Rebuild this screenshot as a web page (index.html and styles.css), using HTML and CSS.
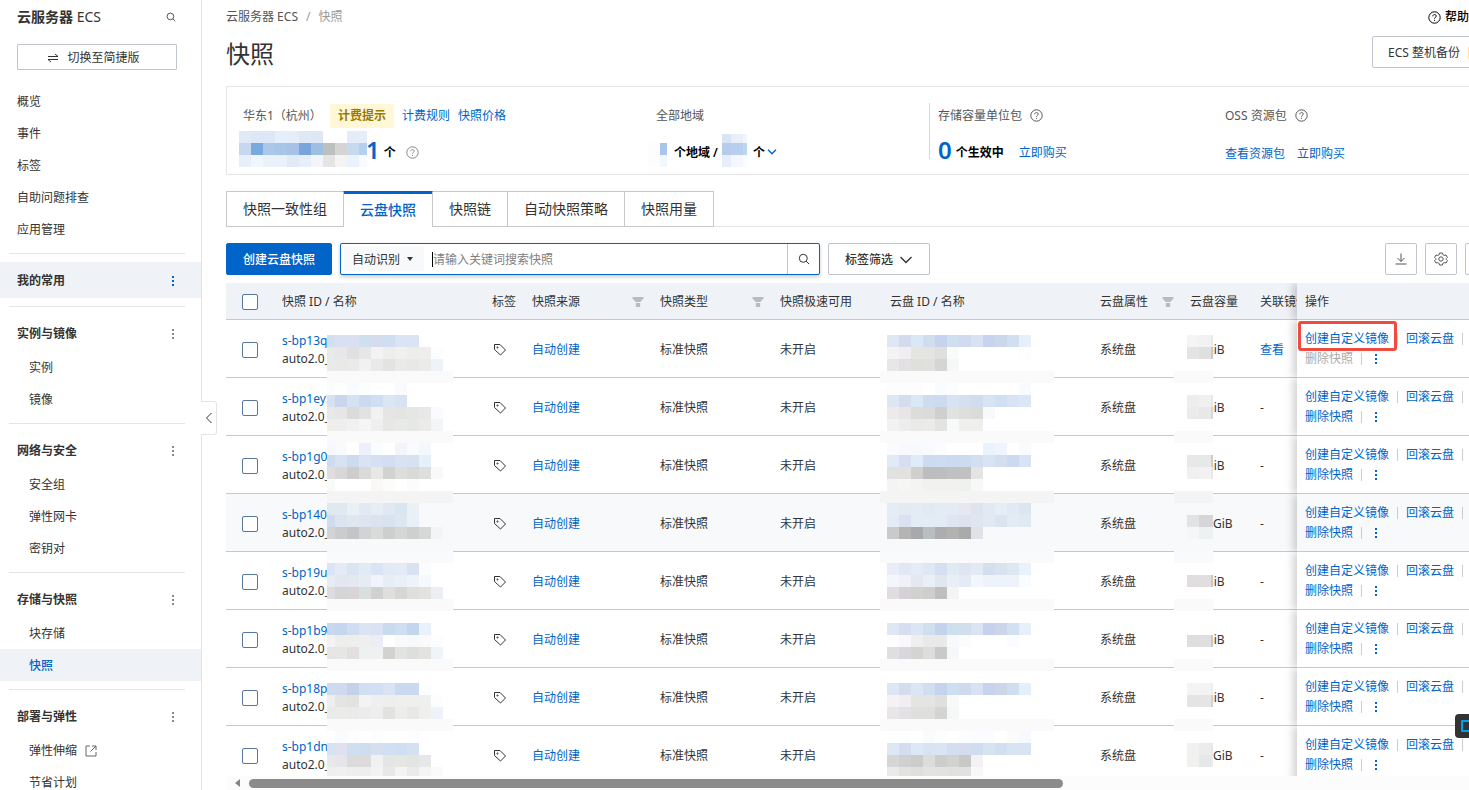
FILE: index.html
```html
<!DOCTYPE html>
<html lang="zh-CN">
<head>
<meta charset="utf-8">
<meta name="viewport" content="width=device-width, initial-scale=1">
<title>快照 - 云服务器 ECS</title>
<link rel="stylesheet" href="styles.css">
</head>
<body>
<svg class="defs" aria-hidden="true">
  <symbol id="i-search" viewBox="0 0 12 12"><circle cx="5.3" cy="5.3" r="4"/><path d="M8.2 8.2l2.9 2.9"/></symbol>
  <symbol id="i-help" viewBox="0 0 13 13"><circle cx="6.500" cy="6.500" r="5.700"/><path d="M4.800 5.300c0-2.300 3.500-2.200 3.500-.2 0 1.200-1.800 1.300-1.800 2.600M6.500 8.900v1"/></symbol>
  <symbol id="i-tag" viewBox="0 0 14 14"><path d="M1.500 1.500h5.500l5.500 5.500-5 5-6-5.500z"/><circle cx="4.500" cy="4.500" r=".6"/></symbol>
  <symbol id="i-filter" viewBox="0 0 12 12"><path d="M.5 1h11v1.500L8.200 6H3.800L.5 2.500zM3.800 7h4.400v4H3.800z"/></symbol>
  <symbol id="i-down" viewBox="0 0 14 14"><path d="M1.500 4l5.500 5.500L12.500 4"/></symbol>
</svg>
<div class="app">
  <aside class="sidebar">
    <div class="side-head"><h2>云服务器 <span>ECS</span></h2><button class="plain" aria-label="搜索"><svg class="ic s10"><use href="#i-search"/></svg></button></div>
    <button class="switch"><svg class="ic s12" viewBox="0 0 12 12"><path d="M1 4.500h10L8 2M11 7.500H1L4 10"/></svg>切换至简捷版</button>
    <nav>
      <ul>
        <li><a href="#">概览</a></li><li><a href="#">事件</a></li><li><a href="#">标签</a></li><li><a href="#">自助问题排查</a></li><li><a href="#">应用管理</a></li>
      </ul>
      <section><h3 class="on">我的常用<i class="dots"></i></h3></section>
      <section><h3>实例与镜像<i class="dots"></i></h3>
        <ul class="sub"><li><a href="#">实例</a></li><li><a href="#">镜像</a></li></ul></section>
      <section><h3>网络与安全<i class="dots"></i></h3>
        <ul class="sub"><li><a href="#">安全组</a></li><li><a href="#">弹性网卡</a></li><li><a href="#">密钥对</a></li></ul></section>
      <section><h3>存储与快照<i class="dots"></i></h3>
        <ul class="sub"><li><a href="#">块存储</a></li><li><a href="#" class="active">快照</a></li></ul></section>
      <section><h3>部署与弹性<i class="dots"></i></h3>
        <ul class="sub"><li><a href="#">弹性伸缩<svg class="ic s12 ext" viewBox="0 0 12 12"><path d="M5 1H1v10h10V7M7 1h4v4M11 1L5.500 6.500"/></svg></a></li><li><a href="#">节省计划</a></li></ul></section>
    </nav>
    <button class="collapse" aria-label="收起"><svg class="ic" width="8" height="12" viewBox="0 0 8 12"><path d="M6.500 1L1.500 6l5 5"/></svg></button>
  </aside>

  <main class="main">
    <header class="top">
      <div class="crumbs"><a href="#">云服务器 ECS</a><span>/</span><span>快照</span></div>
      <a href="#" class="help"><svg class="ic s13"><use href="#i-help"/></svg>帮助</a>
    </header>
    <div class="title-row"><h1>快照</h1><button class="btn backup">ECS 整机备份<i></i></button></div>

    <section class="card">
      <div class="cell">
        <div class="line">华东1（杭州）<mark>计费提示</mark><a href="#">计费规则</a><a href="#">快照价格</a></div>
        <div class="line val"><svg class="mosaic used" data-m="usage" width="128" height="42"></svg><b class="num">1</b><strong>个</strong><svg class="ic s13 q"><use href="#i-help"/></svg></div>
      </div>
      <div class="cell">
        <div class="line">全部地域</div>
        <div class="line val"><svg class="mosaic region" data-m="region" width="19" height="42"></svg><strong>个地域 /</strong><svg class="mosaic count" data-m="count" width="25" height="42"></svg><strong>个</strong><svg class="ic s10 chev"><use href="#i-down" /></svg></div>
      </div>
      <div class="cell bar">
        <div class="line">存储容量单位包<svg class="ic s13"><use href="#i-help"/></svg></div>
        <div class="line val"><b class="num">0</b><strong>个生效中</strong><a href="#" class="buy">立即购买</a></div>
      </div>
      <div class="cell">
        <div class="line">OSS 资源包<svg class="ic s13"><use href="#i-help"/></svg></div>
        <div class="line val links"><a href="#">查看资源包</a><a href="#">立即购买</a></div>
      </div>
    </section>

    <div class="tabs" role="tablist">
      <button role="tab">快照一致性组</button><button role="tab" aria-selected="true">云盘快照</button><button role="tab">快照链</button><button role="tab">自动快照策略</button><button role="tab">快照用量</button>
    </div>

    <div class="toolbar">
      <button class="btn primary">创建云盘快照</button>
      <div class="search">
        <div class="pick"><select aria-label="搜索类型"><option>自动识别</option></select><i></i></div>
        <span class="caret"></span>
        <input type="text" aria-label="搜索快照" placeholder="请输入关键词搜索快照">
        <button class="go" aria-label="搜索"><svg class="ic s12"><use href="#i-search"/></svg></button>
      </div>
      <button class="btn tagf">标签筛选<svg class="ic s14"><use href="#i-down"/></svg></button>
      <div class="tools">
        <button class="btn sq" aria-label="下载"><svg class="ic s12" viewBox="0 0 12 12"><path d="M6 .5v8M2.500 5L6 8.500 9.500 5M.5 11h11"/></svg></button>
        <button class="btn sq" aria-label="设置"><svg class="ic s14" viewBox="0 0 14 14"><path d="M5.600 1h2.800l.5 1.700 1.300.7 1.800-.4 1.400 2.400-1.300 1.300v.6l1.300 1.300L12 11l-1.800-.4-1.300.7-.5 1.700H5.600l-.5-1.700-1.300-.7L2 11 .6 8.600l1.300-1.300v-.6L.6 5.400 2 3l1.800.4 1.300-.7z"/><circle cx="7" cy="7" r="2.200"/></svg></button>
        <button class="btn sq" aria-label="刷新"></button>
      </div>
    </div>

    <div class="grid">
      <table>
        <colgroup><col class="w46"><col class="w210"><col class="w40"><col class="w128"><col class="w120"><col class="w110"><col class="w210"><col class="w90"><col class="w70"><col class="w47"><col></colgroup>
        <thead><tr>
          <th><input type="checkbox" aria-label="全选"></th><th>快照 ID / 名称</th><th>标签</th>
          <th><div class="th">快照来源<svg class="fi"><use href="#i-filter"/></svg></div></th>
          <th><div class="th">快照类型<svg class="fi"><use href="#i-filter"/></svg></div></th>
          <th>快照极速可用</th><th>云盘 ID / 名称</th>
          <th><div class="th">云盘属性<svg class="fi"><use href="#i-filter"/></svg></div></th>
          <th>云盘容量</th><th>关联镜像</th><th class="act">操作</th>
        </tr></thead>
        <tbody id="rows"></tbody>
      </table>
      <svg class="mosaic over m1" data-m="name" width="126" height="445"></svg>
      <svg class="mosaic over m2" data-m="disk" width="174" height="445"></svg>
      <svg class="mosaic over m3" data-m="size" width="39" height="445"></svg>
    </div>
    <div class="hscroll"><i class="arrow"></i><i class="thumb"></i></div>
  </main>
  <button class="float" aria-label="反馈"><i></i></button>
</div>
<script src="script.js"></script>
</body>
</html>
```
FILE: styles.css
```css
* { box-sizing: border-box; }
body { margin: 0; color: #333; background: #fff; font: 12px/20px "Noto Sans", "Noto Sans CJK SC", sans-serif; }
button, input, select { font: inherit; color: inherit; }
button { cursor: pointer; white-space: nowrap; }
a { color: #0064c8; text-decoration: none; }
h1, h2, h3, ul { margin: 0; padding: 0; font-weight: 400; }
ul { list-style: none; }
strong { color: #000; font-weight: 600; }
.defs { position: absolute; width: 0; height: 0; }
.ic { fill: none; stroke: currentColor; stroke-width: 1; flex: none; }
.s10 { width: 10px; height: 10px; }
.s12 { width: 12px; height: 12px; }
.s13 { width: 13px; height: 13px; }
.s14 { width: 14px; height: 14px; }
.app { display: flex; height: 100vh; overflow: hidden; position: relative; }

.sidebar { width: 202px; flex: none; border-right: 1px solid #e3e4e6; position: relative; }
.side-head { display: flex; justify-content: space-between; align-items: center; height: 44px; padding: 0 25px 10px 17px; }
.side-head h2 { font-size: 14px; font-weight: 600; }
.side-head h2 span { font-weight: 400; }
.plain { border: 0; background: none; padding: 0; display: flex; }
.switch { display: flex; align-items: center; justify-content: center; gap: 8px; width: 160px; height: 26px; margin: 0 0 15px 17px; padding: 1px 7px 0 0; border: 1px solid #c0c4cc; border-radius: 1px; background: #fff; }
.sidebar li a { display: flex; align-items: center; height: 32px; padding: 2px 0 0 17px; color: #333; }
.sidebar .sub a { padding-left: 29px; }
.sidebar li a.active { background: #eff3f8; color: #0064c8; font-weight: 500; }
.sidebar section::before { content: ""; display: block; height: 1px; margin: 8px 16px 8px 9px; background: #e3e4e6; }
.sidebar h3 { display: flex; align-items: center; justify-content: space-between; height: 36px; padding: 1px 27px 0 17px; font-size: 12px; font-weight: 600; }
.sidebar h3.on { background: #eff3f8; }
.dots { width: 2px; height: 10px; color: #888; background: linear-gradient(currentColor 2px, transparent 2px 4px, currentColor 4px 6px, transparent 6px 8px, currentColor 8px); }
.on .dots { color: #0064c8; }
.ext { margin-left: 8px; color: #666; }
.collapse { position: absolute; left: 201px; top: 401px; width: 16px; height: 34px; padding: 0; display: flex; align-items: center; justify-content: center; border: 1px solid #e3e4e6; border-left: 0; border-radius: 0 3px 3px 0; background: #fff; }

.main { flex: 1; min-width: 0; display: flex; flex-direction: column; padding-left: 24px; overflow: hidden; }
.top { display: flex; justify-content: space-between; align-items: center; height: 32px; padding-top: 2px; }
.crumbs { display: flex; gap: 8px; color: #999; }
.crumbs a { color: #555; }
.help { display: flex; align-items: center; gap: 4px; color: #000; font-weight: 500; }
.title-row { display: flex; justify-content: space-between; align-items: center; height: 40px; margin-bottom: 14px; }
h1 { padding-top: 3px; font-size: 24px; line-height: 36px; }
.btn { display: flex; align-items: center; justify-content: center; height: 32px; padding: 1px 16px 0; border: 1px solid #c0c4cc; border-radius: 2px; background: #fff; flex: none; }
.backup { margin-right: -32px; padding-left: 15px; gap: 8px; }
.backup i { width: 16px; height: 12px; background: #ffe4a0; }

.card { display: grid; grid-template-columns: minmax(0, 413fr) minmax(0, 273fr) minmax(0, 296fr) minmax(0, 244fr); height: 89px; flex: none; padding: 16px 0 0 16px; border: 1px solid #e3e4e6; border-right: 0; }
.cell { display: flex; flex-direction: column; gap: 13px; }
.cell.bar { height: 56px; border-left: 1px solid #d8d8d8; padding-left: 8px; }
.line { display: flex; align-items: center; gap: 8px; height: 24px; flex: none; padding-top: 1px; color: #555; white-space: nowrap; }
.line mark { padding: 2px 8px; border-radius: 2px; background: #fff7d6; color: #997a00; font-weight: 600; }
.val { gap: 4px; padding-top: 0; }
.val strong { padding-top: 2px; }
.num { padding-bottom: 4px; color: #0064c8; font-size: 24px; line-height: 24px; font-weight: 600; }
.used { margin-left: -4px; }
.used + .num { margin-left: -5px; }
.val .q { margin-left: 6px; color: #888; }
.region { margin: 0 3px 0 -8px; }
.count { margin-right: 2px; }
.val .chev { color: #0064c8; stroke-width: 2; margin-left: -2px; }
.buy { margin-left: 11px; padding-top: 2px; }
.links { gap: 12px; padding-top: 3px; }
.mosaic { flex: none; shape-rendering: crispEdges; }

.tabs { display: flex; height: 36px; flex: none; margin-top: 16px; border-bottom: 1px solid #e3e4e6; }
.tabs button { height: 36px; padding: 0 16px; margin-right: -1px; border: 1px solid #c8c8c8; background: #fff; font-size: 14px; }
.tabs [aria-selected] { position: relative; border-bottom: 0; color: #0064c8; box-shadow: inset 0 2px #0064c8; border-top-color: #0064c8; font-weight: 500; }

.toolbar { display: flex; gap: 8px; height: 32px; flex: none; margin: 16px 0 8px; }
.primary { border-color: #0064c8; background: #0064c8; color: #fff; font-weight: 500; }
.search { display: flex; align-items: center; width: 480px; border: 1px solid #0064c8; border-radius: 2px; box-shadow: 0 2px 4px rgba(0, 0, 0, .2); padding-left: 3px; background: #fff; }
.pick { display: flex; align-items: center; width: 80px; height: 24px; background: #f7f9fa; padding-left: 8px; }
.pick select { appearance: none; border: 0; background: none; padding: 1px 0 0; width: 55px; outline: 0; }
.pick i { border: 3px solid transparent; border-top: 4px solid #333; border-bottom: 0; }
.caret { width: 1px; height: 15px; margin-left: 8px; background: #000; }
.search input { flex: 1; min-width: 0; border: 0; outline: 0; padding: 1px 0 0; background: none; }
.search input::placeholder { color: #808080; }
.go { width: 32px; height: 30px; display: flex; align-items: center; justify-content: center; padding: 0; border: 0; border-left: 1px solid #c0c4cc; background: none; }
.tagf { gap: 6px; font-weight: 500; }
.tagf .ic { stroke-width: 1.4; }
.tools { display: flex; gap: 8px; margin: 0 -28px 0 auto; }
.sq { width: 32px; padding: 0; color: #555; }

.grid { flex: 1; min-height: 0; overflow: hidden; position: relative; }
table { width: 100%; table-layout: fixed; border-collapse: separate; border-spacing: 0; }
.w46 { width: 46px; } .w210 { width: 210px; } .w40 { width: 40px; } .w128 { width: 128px; } .w120 { width: 120px; }
.w110 { width: 110px; } .w90 { width: 90px; } .w70 { width: 70px; } .w47 { width: 47px; }
th, td { padding: 2px 0 0 10px; border-bottom: 1px solid #c8c8c8; text-align: left; font-weight: 400; white-space: nowrap; overflow: hidden; }
th { height: 37px; background: #eff3f8; }
td { height: 58px; background: #fff; }
tr.hover td { background: #f7f9fb; }
th:first-child, td:first-child { padding-left: 16px; }
.th { display: flex; justify-content: space-between; align-items: center; padding-right: 6px; }
.fi { width: 12px; height: 12px; fill: #bbb; }
input[type=checkbox] { appearance: none; display: block; width: 16px; height: 16px; margin: 0; border: 1px solid #56779f; border-radius: 2px; background: #fff; }
.id { display: block; width: 45px; line-height: 18px; overflow: hidden; }
.tag { display: block; margin-left: 1px; color: #333; }
.gib { padding-left: 15px; }
.gib.wide { padding-left: 23px; }
th.act, td.act { padding-left: 8px; overflow: visible; box-shadow: -4px 0 8px rgba(0, 0, 0, .18); clip-path: inset(0 0 0 -12px); }
td.act { padding-top: 0; }
.ops { display: flex; align-items: center; position: relative; }
.ops .off { color: #aaa; }
.ops > * { flex: none; }
.ops .sep { width: 1px; height: 12px; margin: 0 8px; background: #ccc; }
.ops .dots { margin-left: 5px; color: #0064c8; }
.ring { position: absolute; left: -7px; top: -8px; width: 99px; height: 30px; border: 3px solid #f04b41; border-radius: 3px; pointer-events: none; }
.over { position: absolute; top: 52px; }
.m1 { left: 101px; }
.m2 { left: 654px; }
.m3 { left: 948px; }
.hscroll { display: flex; align-items: center; height: 14px; flex: none; background: #fcfcfc; padding-left: 9px; }
.arrow { border: 4px solid transparent; border-right: 5px solid #858585; border-left: 0; margin-right: 9px; }
.thumb { width: 66%; height: 9px; border-radius: 5px; background: #8b8b8b; }
.float { position: absolute; right: -16px; top: 714px; width: 30px; height: 24px; padding: 0 0 0 6px; border: 0; border-radius: 4px; background: #333; display: flex; align-items: center; }
.float i { width: 16px; height: 12px; border: 2px solid #00a0f0; border-radius: 1px; }
```
FILE: script.js
```js
// Visible part of each snapshot ID; a wide capacity leaves the whole unit readable.
const rows = [
  ['s-bp13q', 0], ['s-bp1ey3', 0], ['s-bp1g0', 0], ['s-bp140g', 1],
  ['s-bp19u', 0], ['s-bp1b9', 0], ['s-bp18p', 0], ['s-bp1dn', 1]
];
document.getElementById('rows').innerHTML = rows.map(([id, wide], i) => `
<tr${i === 3 ? ' class="hover"' : ''}>
  <td><input type="checkbox" aria-label="${id}"></td>
  <td><a href="#" class="id">${id}</a><span class="id">auto2.0_</span></td>
  <td><svg class="ic s14 tag"><use href="#i-tag"/></svg></td>
  <td><a href="#">自动创建</a></td><td>标准快照</td><td>未开启</td><td></td><td>系统盘</td>
  <td><div class="gib${wide ? ' wide' : ''}">GiB</div></td>
  <td>${i ? '-' : '<a href="#">查看</a>'}</td>
  <td class="act">
    <div class="ops"><a href="#">创建自定义镜像</a><i class="sep"></i><a href="#">回滚云盘</a><i class="sep"></i>${i ? '' : '<span class="ring"></span>'}</div>
    <div class="ops"><a href="#"${i ? '' : ' class="off"'}>删除快照</a><i class="sep"></i><i class="dots"></i></div>
  </td>
</tr>`).join('');

// Blurred-out values: row index -> colours of the 12px blocks, "." leaves a block empty.
const bars = { 3: 'fafafa', 8: 'fafafa', 13: 'f3f4f3', 18: 'fafafa', 22: 'fafafa', 27: 'fafafa', 32: 'fafafa' };
const mosaics = {
  name: { w: 126, first: 8, x: 0, bars, rows: {
    0: 'd3def1 d9e0f1 d9e0f1 cedff0 d4dcee cfdef3 dbe4f4 dbe4f4',
    1: 'e9e9e9 e7e6e9 e0e0e0 e6e7e6 f3f3f3 eeeeee f0f0ee edeeec efeeed fcfdff',
    2: 'e9ebea e9e9e8 ebeaea f0f2f1 ebe9e7 e3e3e1 ebeae8 e7e9e5 ebebe9 eef3f7',
    4: 'fafcfe fefefe f8fbff fcfefe . . f8fafe',
    5: 'd6e2f0 c8d5ed d6e2f2 ccdaf0 d1def1 d9e6f4 d7e3f3',
    6: 'e8e8e9 e6e5e8 dbdbdb e2e2e2 f1f2f1 e5e5e5 e4e5e3 e5e7e5 e8e8e8 f9fbfe',
    7: 'eeeeec eeeeed f1f1f1 f5f5f5 eeefee e7e7e5 e9e9e7 e6e8e7 ebebea f4f5f7',
    9: 'f5f8fe f8fbfe . ebf0fa fafdff . f3f5fb f8fcff f3f8fd',
    10: 'cedcf0 d7e2f3 ccdcf0 d9e3f3 d5e1f3 d3dff1 d8e2f2 d6e1f1 e5f0fa',
    11: 'e1dddd d8d8d9 cdcdcd d9dad9 e8e8e4 d2d2ce dddedb d8dad7 dededd f9f9f9',
    12: 'f9fafa . . . faf7f6 fcfcfa . fcfcfb',
    14: 'e0e8f2 e0e8f2 ebeff6 e1e9f5 e8edf5 e1e8f3 d8e6f2 eaf1f6',
    15: 'cfdcee dce4f1 dfe7f1 dde5f0 dbe3f1 d8e2f0 dce7f2 e9f0f6',
    16: 'd1d3d4 cacccd c4c5c7 d2d4d4 d9dbdb cdcfce d5d7d5 cdd0ce d6d8d7 f2f4f6',
    19: 'dae4f4 e4ebf6 dbe4f3 e2eaf5 dbe4f4 e2eaf5 e4eaf6 d9e2f3 fafcff',
    20: 'e8ebf3 e4e7ef e4e8f0 e7ebf4 f1f4fa e6edf7 ebf0f7 edf3f9 f5f8fc',
    21: 'dfdcdf d5d5d8 d9d5d6 d9dede d1d2cf dfdfdc d5d7d4 dfdfdc e3e2df ebeff3',
    24: 'c9d8ee c4d7ef d0ddf2 dbe4f3 dae2f3 c9dbef d0dff0 c3d6ee e9f2fb',
    25: 'f3f3f3 ededee eeeeee efeff0 eaeef4 ffffff f8fafd f8f9fb fafbf9 fcfdff',
    26: 'e5e5e5 e6e6e5 e3dfde eff0f2 eff0f2 d2d3cf e3e4e0 dcdfdc e3e4e0 eff4f8',
    29: 'cedaef d1d9ed c3d1ea d2def1 d3dff2 dae3f3 c8d9f0 cad9ef fcfdff',
    30: 'eeeeee e5e4e5 e2e2e0 f2f3f2 efefef eeeeec efefee efefee efefee fcfdff',
    31: 'e9ebea ebebea eaeaea ebeceb eeeeee e2e3e1 edeeeb e7e9e7 eff0ee edf3f8',
    33: '. fafbfe fcfefe . fcfdff . . fcfdff',
    34: 'd6e3f5 dfe0f0 d0def1 cedef0 d6dfef d0dff3 cedff2 d5e0f1',
    35: 'e9e9e9 e6e5e9 dbdbda dedad9 f1f1f3 e4e6e5 e6e6e3 e3e5e4 e7e7e7',
    36: 'eff0ee f0f1ee eeeeee eeeeee f3f3f3 e8e8e6 f3f4f6 ebecea f5f5f5 fafafa' } },
  disk: { w: 174, first: 12, x: 7, bars, rows: {
    0: 'dfe7f5 d5dbee dae7f5 cfddef c5d3ee d0dff0 cfdcf0 d8e2f3 c6d4ee cbd7ea d0e0f0 e6effa',
    1: 'f4f3f4 f0eef3 e4e4e1 e4e4e3 dfdfde f9fafa . . . . . fcfdff',
    2: 'e9e6e8 e1e0e3 dfdfdb e0e0df d5d5d3 f6f8f8',
    4: 'fdfdfe fdfdfe fdfdfe . f8fbff fbfdff . . . . . f8fbff',
    5: 'dde7f4 d4dcee dae8f6 cddcf0 cddaf1 d7e3f3 d6dff0 d0dcf0 d7e5f3 d1dff2 d8e4f3 dbe6f6',
    6: 'edeaec e7e5e8 dcddd8 dbdbda cfcfcf e1e3e1 dededd dbdbd9 f8f9fa',
    7: 'f2f2f2 ecedec eaebe8 ebebe9 e3e3e2 f8f9fa eff0ee eff0ee',
    9: 'fafbff f8f9fd f6fafd f8fafd fafcff . . . eaf2fb f1f4fd . fafbff',
    10: 'e2eaf7 d8def1 dfebf8 ccdbef cddcef ccdaef cddbee d3dff0 d7e4f3 d3dff1 cbdaf2 d9e3f5',
    11: 'e1e1e1 e1e1df d0cfcd bdbdbd bdbebf c0c1c0 c1c2c0 e4e4e3',
    12: 'f4f5f3 f6f7f4 f4f4f2 f1f2f0 f1f2ef f1f1ef eef2ef f8f8f8',
    14: 'e4ecf5 e4e9f2 e4ebf4 e1e9f3 e4ebf4 e4ebf4 e5e8f1 dde4f0 e2e9f3 e5edf6 e1e9f3 dce6f0',
    15: 'e3ebf4 dbe1f0 e3ebf4 e3ebf4 e3ebf4 dfe6f1 dce3ef dfe6f1 e1e9f3 dae5f0 e3ebf4 e1e9f3',
    16: 'cacaca b4b4b5 a8a9ab b9bebe adadad b2b2b1 a9abaa e0e2e7',
    19: 'e8edf7 e3e6f3 e5ecf7 dfe7f2 d5dff1 e1e9f3 dfe6f2 e3eaf4 d3dfef d9e2ef dee8f2 e9f1fb',
    20: 'f3f7fd eff0f8 e5e8ef eaeef7 e1e7ee eaeff7 e4ebf6 f3f6fc eef2fa eef2fa eef2fa fafdff',
    21: 'e1dde0 d4d2d6 d1d2cd cfcecc bfbfbf f3f5f5',
    24: 'dfe7f5 d6def0 dbe6f5 d0dfef c4d2ec cedfee d0dfee dbe4f3 c4d2ed cbd6e9 d1e1f1 e6effa',
    25: 'fefdfe faf8fc efefef e9e9ea e9e9ea f7f9fa fbfdfd . . . fafcff',
    26: 'e0dee0 d8d7db d4d5cf dddddd c9c9c7 f5f7fa',
    29: 'dde6f4 d4dcee dae6f4 d0deef c5d3ed d0dff0 cedbef d8e2f3 c6d3ed cbd6e9 cfdfef e5effa',
    30: 'f4f2f4 f1eef2 e4e4e0 e4e4e4 dfdfde f8fafa',
    31: 'e9e6e8 e2e1e4 dfdfdb dfdfdd d4d4d2 f6f8f8',
    33: 'fdfefe fdfefe . f9fcff fbfdff . fbfdff fafcff fafcff . fbfcfa f4faff',
    34: 'dee8f5 d6dcef dbe8f6 d8e3f4 dbe4f3 d3dff1 d6dbee ceddf0 d6e3f1 d2dff0 d7e4f3 d9e3f3',
    35: 'd6d6d6 d0d0d0 cccccb dadddb cdcdcc d2d2d1 c8c8c7 f2f2f4',
    36: 'eaeae9 e2e2e0 dfdfdc e2e4e2 e2e2e1 e1e2df e1e1e0 f7f8fa' } },
  size: { w: 39, first: 12, x: 13, bars, rows: {
    0: 'f4f4f4 f2f2f2 e9e9e9', 1: 'e4e4e4 dfdfe0 c8c8c8',
    5: 'ededed f0f0f0 e6e6e6', 6: 'ebebeb e8e8e8 d7d7d7',
    10: 'e9e7e8 e8e8e8 cccccc', 11: 'f0f0f0 f2f2f2 e8e8e8',
    15: 'e3e3e4 d6d6d8 d5d6d7', 16: 'f5f6f7 eef1f2 eef1f2',
    20: 'dfdddd e0dede c8c8c8', 25: 'dfdddd e0dede c8c8c8',
    29: 'f4f4f4 f3f3f3 eeeeee', 30: 'e4e4e4 e5e5e5 d2d2d2',
    34: 'f1f1f0 ececec e8e8e8', 35: 'f1f1f0 e5e7e9 e8eaec' } },
  usage: { w: 128, first: 12, x: 0, rows: {
    0: 'e0eaf7 dce8f5 dde8f6 e5eefa e7edf8 e0e8f5 dde7f6 . . e3ecf7 e5edf8',
    1: 'c6d8ef 7aaadd abc7e9 a7c5e8 a6c3e7 78a6dc 9fbfe2 bec0c0 d4d4d4 c7d9ef b5d0ef',
    2: 'e7effa f0f6fd e9f1fb e9f1fb e1eaf7 e7effa f2f6fc e5e4e4 f4f4f5 eaf2fc f7faff' } },
  region: { w: 19, first: 12, x: 0, rows: { 1: 'fcfdfe a7c6ea', 2: 'fdfdfe f2f7fb' } },
  count: { w: 25, first: 9, x: 0, top: 3, rows: { 0: 'd9e5f6 e8eff9 eef5fc', 1: 'b7cceb b9ceed b9d8ef', 2: 'e7eef9 f4f8fe f8fcff' } }
};
document.querySelectorAll('svg[data-m]').forEach(svg => {
  const m = mosaics[svg.dataset.m];
  const rect = (x, row, w, c) => {
    const y = Math.max(row * 12, m.top || 0);
    return `<rect x="${x}" y="${y}" width="${Math.min(w, m.w - x)}" height="${row * 12 + 12 - y}" fill="#${c}"/>`;
  };
  let out = '';
  for (const k in m.bars || {}) out += rect(0, +k, m.w, m.bars[k]);
  for (const k in m.rows) {
    let x = m.x;
    m.rows[k].split(' ').forEach((c, i) => {
      const w = i ? 12 : m.first;
      if (c !== '.') out += rect(x, +k, w, c);
      x += w;
    });
  }
  svg.innerHTML = out;
});
```
